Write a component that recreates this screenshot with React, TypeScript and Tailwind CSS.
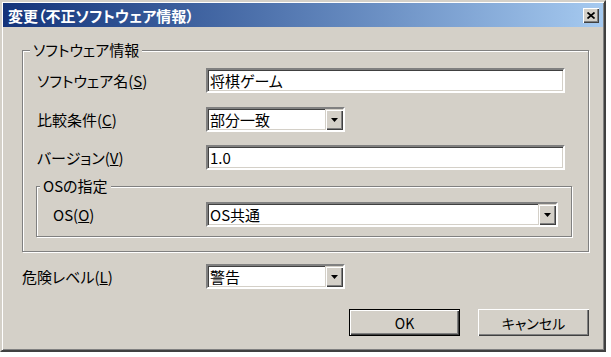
const sunken =
  "border-2 border-t-[#808080] border-l-[#808080] border-b-white border-r-white shadow-[inset_1px_1px_0_#404040,inset_-1px_-1px_0_#d4d0c8] bg-white";

function Arrow() {
  return (
    <svg width="7" height="4" viewBox="0 0 7 4">
      <polygon points="0,0 7,0 3.5,4" fill="#000" />
    </svg>
  );
}

function TextBox({ value, width }: { value: string; width: string }) {
  return (
    <div className={`${sunken} ${width} h-[25px] flex items-center pl-[2px] text-[15px] leading-none`}>
      {value}
    </div>
  );
}

function Combo({ value, width }: { value: string; width: string }) {
  return (
    <div className={`${sunken} ${width} h-[25px] flex items-stretch`}>
      <div className="flex-1 flex items-center pl-[2px] text-[15px] leading-none">{value}</div>
      <div className="w-[18px] bg-[#d4d0c8] flex items-center justify-center shadow-[inset_1px_1px_0_#d4d0c8,inset_2px_2px_0_#fff,inset_-1px_-1px_0_#404040,inset_-2px_-2px_0_#808080]">
        <Arrow />
      </div>
    </div>
  );
}

function Label({ text, mn, width }: { text: string; mn: string; width: string }) {
  return (
    <span className={`${width} shrink-0 text-[15px] leading-none`}>
      {text}(<u>{mn}</u>)
    </span>
  );
}

export default function App() {
  return (
    <div className="w-[611px] h-[357px] bg-white font-['Noto_Sans_CJK_JP','Noto_Sans',sans-serif] [font-feature-settings:'palt'] text-black">
      <div className="w-[606px] h-[352px] bg-[#d4d0c8] border-2 border-t-[#d4d0c8] border-l-[#d4d0c8] border-r-[#404040] border-b-[#404040] shadow-[inset_1px_1px_0_#fff,inset_-1px_-1px_0_#808080] p-px flex flex-col">
        {/* title bar */}
        <div className="h-[24px] shrink-0 flex items-center justify-between pl-[5px] pr-[4px] bg-linear-to-r from-[#14337a] to-[#a6caf0]">
          <span className="text-white font-bold text-[15px] leading-none">変更（不正ソフトウェア情報）</span>
          <button className="w-[16px] h-[15px] bg-[#d4d0c8] flex items-center justify-center shadow-[inset_1px_1px_0_#fff,inset_-1px_-1px_0_#404040,inset_-2px_-2px_0_#808080]">
            <svg width="8" height="7" viewBox="0 0 8 7">
              <path d="M0.5 0.5L7.5 6.5M7.5 0.5L0.5 6.5" stroke="#000" strokeWidth="1.7" />
            </svg>
          </button>
        </div>

        <div className="flex-1 flex flex-col pl-[19px] pr-[14px] pt-[23px]">
          {/* software info group */}
          <div className="relative h-[202px] border border-[#808080] shadow-[1px_1px_0_#fff,inset_1px_1px_0_#fff] pt-[17px] pl-[13px]">
            <span className="absolute -top-[9px] left-[7px] px-[3px] bg-[#d4d0c8] text-[15px] leading-[16px]">
              ソフトウェア情報
            </span>

            <div className="flex items-center">
              <Label text="ソフトウェア名" mn="S" width="w-[170px] pl-px" />
              <TextBox value="将棋ゲーム" width="w-[359px]" />
            </div>
            <div className="flex items-center mt-[14px]">
              <Label text="比較条件" mn="C" width="w-[170px] pl-px" />
              <Combo value="部分一致" width="w-[139px]" />
            </div>
            <div className="flex items-center mt-[13px]">
              <Label text="バージョン" mn="V" width="w-[170px] pl-px" />
              <TextBox value="1.0" width="w-[359px]" />
            </div>

            {/* OS group */}
            <div className="relative mt-[16px] w-[536px] h-[51px] border border-[#808080] shadow-[1px_1px_0_#fff,inset_1px_1px_0_#fff] pt-[15px] pl-[16px]">
              <span className="absolute -top-[9px] left-[3px] px-[3px] bg-[#d4d0c8] text-[15px] leading-[16px]">
                OSの指定
              </span>
              <div className="flex items-center">
                <Label text="OS" mn="O" width="w-[153px]" />
                <Combo value="OS共通" width="w-[352px]" />
              </div>
            </div>
          </div>

          <div className="flex items-center mt-[12px]">
            <Label text="危険レベル" mn="L" width="w-[184px]" />
            <Combo value="警告" width="w-[139px]" />
          </div>

          <div className="flex justify-end gap-[18px] mt-[20px]">
            <button className="w-[111px] h-[27px] border border-black bg-[#d4d0c8] text-[14px] leading-none shadow-[inset_1px_1px_0_#fff,inset_-1px_-1px_0_#404040,inset_-2px_-2px_0_#808080]">
              OK
            </button>
            <button className="w-[111px] h-[27px] bg-[#d4d0c8] text-[14px] leading-none shadow-[inset_1px_1px_0_#fff,inset_-1px_-1px_0_#404040,inset_-2px_-2px_0_#808080]">
              キャンセル
            </button>
          </div>
        </div>
      </div>
    </div>
  );
}
